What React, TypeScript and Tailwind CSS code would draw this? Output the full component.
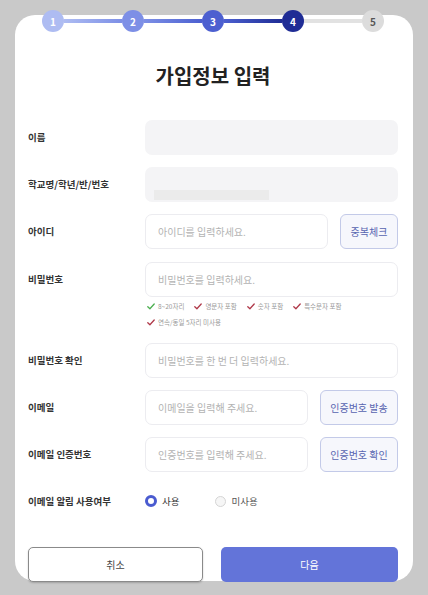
import React from 'react';

const steps = [
  { n: 1, bg: 'bg-[#aebcf2]', text: 'text-white' },
  { n: 2, bg: 'bg-[#7d8fe6]', text: 'text-white' },
  { n: 3, bg: 'bg-[#4c5fd0]', text: 'text-white' },
  { n: 4, bg: 'bg-[#1f2c95]', text: 'text-white' },
  { n: 5, bg: 'bg-[#dcdcdc]', text: 'text-[#555]' },
];

const lines = [
  'bg-gradient-to-r from-[#aebcf2] to-[#7d8fe6]',
  'bg-gradient-to-r from-[#7d8fe6] to-[#4c5fd0]',
  'bg-gradient-to-r from-[#4c5fd0] to-[#1f2c95]',
  'bg-[#e2e2e2]',
];

const Check = ({ color }: { color: string }) => (
  <svg width="8" height="7" viewBox="0 0 8 7" fill="none">
    <path d="M0.8 3.8 L2.9 5.8 L7.2 1" stroke={color} strokeWidth="1.3" strokeLinecap="round" strokeLinejoin="round" />
  </svg>
);

const Field = ({ placeholder, filled }: { placeholder?: string; filled?: boolean }) => (
  <div
    className={
      'flex-1 h-[35px] rounded-[7px] flex items-center px-[12px] text-[10px] text-[#b3b3b3] ' +
      (filled ? 'bg-[#f4f4f6]' : 'bg-white border border-[#ececf0]')
    }
  >
    {placeholder}
  </div>
);

const SideButton = ({ label, w }: { label: string; w: string }) => (
  <button className={`ml-[12px] ${w} h-[35px] rounded-[6px] border-[1.5px] border-[#c3cae8] bg-[#f6f7fc] text-[10px] text-[#5664b0]`}>
    {label}
  </button>
);

const App = () => {
  return (
    <div
      className="relative w-[428px] h-[595px] bg-[#c9c9c9] pt-[15px] px-[15px]"
      style={{ fontFamily: '"Noto Sans CJK KR", "Noto Sans", sans-serif' }}
    >
      {/* stepper over the card edge */}
      <div className="absolute top-[10px] left-[42px] flex items-center">
        {steps.map((s, i) => (
          <React.Fragment key={s.n}>
            <div className={`w-[22px] h-[22px] rounded-full ${s.bg} ${s.text} flex items-center justify-center text-[10px] font-semibold`}>
              {s.n}
            </div>
            {i < lines.length && <div className={`w-[58px] h-[4px] ${lines[i]}`} />}
          </React.Fragment>
        ))}
      </div>

      <div className="bg-white rounded-[20px] h-[566px] pt-[47px] pl-[13px] pr-[15px]">
        <h1 className="text-center text-[20px] leading-[28px] font-bold text-[#222]">가입정보 입력</h1>

        <div className="mt-[30px] flex items-center">
          <div className="w-[117px] text-[9.5px] font-semibold text-[#333]">이름</div>
          <Field filled />
        </div>

        <div className="mt-[12px] flex items-center">
          <div className="w-[117px] text-[9.5px] font-semibold text-[#333]">학교명/학년/반/번호</div>
          <div className="flex-1 h-[35px] rounded-[7px] bg-[#f4f4f6] flex items-end px-[9px] pb-[2px]">
            <div className="w-[115px] h-[10px] bg-[#ebebeb]" />
          </div>
        </div>

        <div className="mt-[12px] flex items-center">
          <div className="w-[117px] text-[9.5px] font-semibold text-[#333]">아이디</div>
          <Field placeholder="아이디를 입력하세요." />
          <SideButton label="중복체크" w="w-[58px]" />
        </div>

        <div className="mt-[13px] flex items-center">
          <div className="w-[117px] text-[9.5px] font-semibold text-[#333]">비밀번호</div>
          <Field placeholder="비밀번호를 입력하세요." />
        </div>

        <div className="ml-[119px] mt-[1px] text-[6.5px] text-[#9a9a9a] leading-[16px]">
          <div className="flex items-center gap-[10px]">
            <span className="flex items-center gap-[3px]"><Check color="#4caf50" />8~20자리</span>
            <span className="flex items-center gap-[3px]"><Check color="#b03a4a" />영문자 포함</span>
            <span className="flex items-center gap-[3px]"><Check color="#b03a4a" />숫자 포함</span>
            <span className="flex items-center gap-[3px]"><Check color="#b03a4a" />특수문자 포함</span>
          </div>
          <div className="flex items-center gap-[3px]"><Check color="#b03a4a" />연속/동일 5자리 미사용</div>
        </div>

        <div className="mt-[13px] flex items-center">
          <div className="w-[117px] text-[9.5px] font-semibold text-[#333]">비밀번호 확인</div>
          <Field placeholder="비밀번호를 한 번 더 입력하세요." />
        </div>

        <div className="mt-[12px] flex items-center">
          <div className="w-[117px] text-[9.5px] font-semibold text-[#333]">이메일</div>
          <Field placeholder="이메일을 입력해 주세요." />
          <SideButton label="인증번호 발송" w="w-[78px]" />
        </div>

        <div className="mt-[12px] flex items-center">
          <div className="w-[117px] text-[9.5px] font-semibold text-[#333]">이메일 인증번호</div>
          <Field placeholder="인증번호를 입력해 주세요." />
          <SideButton label="인증번호 확인" w="w-[78px]" />
        </div>

        <div className="mt-[22px] flex items-center h-[14px]">
          <div className="w-[117px] text-[9.5px] font-semibold text-[#333]">이메일 알림 사용여부</div>
          <div className="flex items-center gap-[5px] text-[9.5px] text-[#333]">
            <span className="w-[12px] h-[12px] rounded-full border-[3px] border-[#4a5bd0] bg-white" />
            사용
          </div>
          <div className="ml-[36px] flex items-center gap-[5px] text-[9.5px] text-[#555]">
            <span className="w-[11px] h-[11px] rounded-full border border-[#d5d5d5] bg-[#f6f6f6]" />
            미사용
          </div>
        </div>

        <div className="mt-[39px] flex gap-[18px]">
          <button className="w-[175px] h-[35px] rounded-[5px] border border-[#8a8a8a] bg-white text-[10px] text-[#444] shadow-[0_1px_2px_rgba(0,0,0,0.2)]">
            취소
          </button>
          <button className="flex-1 h-[35px] rounded-[5px] bg-[#6374d9] text-[10px] text-white">
            다음
          </button>
        </div>
      </div>
    </div>
  );
};

export default App;
